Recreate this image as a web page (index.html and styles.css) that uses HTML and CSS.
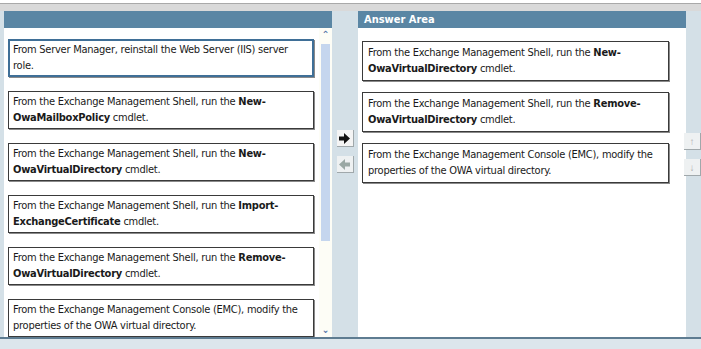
FILE: index.html
```html
<!DOCTYPE html>
<html lang="en">
<head>
    <meta charset="UTF-8">
    <title>Answer Area</title>
    <link rel="stylesheet" href="styles.css">
</head>
<body>
    <div class="topstrip"></div>
    <div class="workspace">
        <section class="panel source">
            <div class="panel-head"></div>
            <div class="panel-body">
                <div class="list">
                    <div class="item selected">From Server Manager, reinstall the Web Server (IIS) server role.</div>
                    <div class="item">From the Exchange Management Shell, run the <b>New-<br>OwaMailboxPolicy</b> cmdlet.</div>
                    <div class="item">From the Exchange Management Shell, run the <b>New-<br>OwaVirtualDirectory</b> cmdlet.</div>
                    <div class="item">From the Exchange Management Shell, run the <b>Import-<br>ExchangeCertificate</b> cmdlet.</div>
                    <div class="item">From the Exchange Management Shell, run the <b>Remove-<br>OwaVirtualDirectory</b> cmdlet.</div>
                    <div class="item">From the Exchange Management Console (EMC), modify the properties of the OWA virtual directory.</div>
                </div>
                <div class="scrollbar">
                    <span class="sb-arrow">&#8963;</span>
                    <div class="sb-track"><div class="sb-thumb"></div></div>
                    <span class="sb-arrow">&#8964;</span>
                </div>
            </div>
        </section>
        <div class="movers">
            <button class="mover active">
                <svg width="11" height="11" viewBox="0 0 11 11"><path d="M0 3.5h5V0l6 5.5-6 5.5V7.5H0z" fill="#111"/></svg>
            </button>
            <button class="mover">
                <svg width="11" height="11" viewBox="0 0 11 11"><path d="M11 3.5H6V0L0 5.5 6 11V7.5h5z" fill="#9aa8a4"/></svg>
            </button>
        </div>
        <section class="panel answer">
            <div class="panel-head">Answer Area</div>
            <div class="panel-body">
                <div class="list">
                    <div class="item">From the Exchange Management Shell, run the <b>New-<br>OwaVirtualDirectory</b> cmdlet.</div>
                    <div class="item">From the Exchange Management Shell, run the <b>Remove-<br>OwaVirtualDirectory</b> cmdlet.</div>
                    <div class="item">From the Exchange Management Console (EMC), modify the properties of the OWA virtual directory.</div>
                </div>
            </div>
        </section>
        <div class="movers order">
            <button class="mover"><span class="ord">&#8593;</span></button>
            <button class="mover"><span class="ord">&#8595;</span></button>
        </div>
    </div>
    <div class="bottomstrip"></div>
</body>
</html>
```

FILE: styles.css
```css
body {
    margin: 0;
    width: 701px;
    height: 349px;
    overflow: hidden;
    background: #fff;
    font-family: Tahoma, "DejaVu Sans Condensed", "DejaVu Sans", sans-serif;
    font-size: 11px;
    letter-spacing: -0.25px;
    color: #1a1a1a;
}

.topstrip {
    height: 7px;
    margin-top: 3px;
    border-top: 1px solid #a9a9a9;
    background: #d9d9d9;
}

.workspace {
    display: flex;
    height: 326px;
    background: #d4e0e7;
}

.panel {
    display: flex;
    flex-direction: column;
    width: 328px;
    background: #fff;
}

.panel.source {
    margin-left: 4px;
}

.panel-head {
    height: 17px;
    background: #5a86a4;
    color: #fff;
    font-weight: bold;
    font-size: 11px;
    letter-spacing: 0;
    line-height: 17px;
    padding-left: 6px;
}

.panel-body {
    flex: 1;
    display: flex;
    overflow: hidden;
}

.list {
    flex: 1;
    display: flex;
    flex-direction: column;
    gap: 14px;
    padding: 11px 0 0 4px;
}

.answer .list {
    padding: 13px 17px 0 4px;
    gap: 11px;
}

.item {
    border: 1px solid #3a3a3a;
    box-shadow: 1px 1px 0 #8a8a8a;
    padding: 2px 4px 2px 4px;
    line-height: 16px;
    background: #fff;
}

.answer .item {
    padding: 3px 5px;
}

.item.selected {
    border: 2px solid #3f6f97;
    padding: 1px 3px;
}

.scrollbar {
    width: 13px;
    margin-left: 5px;
    display: flex;
    flex-direction: column;
    align-items: center;
    background: #fdfdf6;
}

.sb-arrow {
    height: 14px;
    font-size: 10px;
    line-height: 14px;
    color: #5577aa;
    font-weight: bold;
}

.sb-track {
    flex: 1;
    width: 9px;
}

.sb-thumb {
    height: 197px;
    margin-top: 2px;
    background: #c5d6ee;
}

.movers {
    width: 26px;
    display: flex;
    flex-direction: column;
    align-items: center;
    gap: 9px;
    padding-top: 119px;
}

.mover {
    width: 17px;
    height: 17px;
    padding: 0;
    border: none;
    border-right: 1px solid #a0a8ab;
    border-bottom: 1px solid #a0a8ab;
    background: #eef1f2;
    display: flex;
    align-items: center;
    justify-content: center;
}

.mover.active {
    background: #f4f4f4;
}

.movers.order {
    width: 15px;
    align-items: flex-end;
    padding-top: 122px;
}

.ord {
    color: #b0b0b0;
    font-size: 10px;
}

.bottomstrip {
    height: 12px;
    border-top: 2px solid #5e7c91;
    background: #dce6ec;
}
```
